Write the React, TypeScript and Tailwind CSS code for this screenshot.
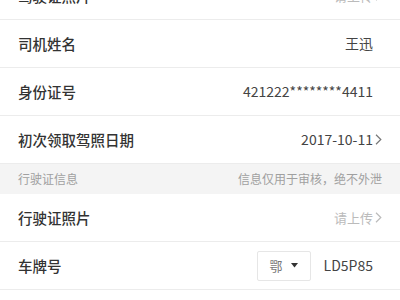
import React from "react";

const Chevron = ({ color = "#888" }: { color?: string }) => (
  <svg width="7" height="11" viewBox="0 0 7 11" className="ml-[2px] shrink-0">
    <path d="M1 0.8 L5.8 5.5 L1 10.2" fill="none" stroke={color} strokeWidth="1.2" />
  </svg>
);

const Row = ({ label, children }: { label: string; children?: React.ReactNode }) => (
  <div className="flex h-[48px] items-center justify-between border-b border-[#ececec] bg-white pl-[18px] pr-[18px]">
    <span className="text-[14.5px] font-medium text-[#333]">{label}</span>
    <div className="flex items-center">{children}</div>
  </div>
);

export default function App() {
  return (
    <div
      className="h-[300px] w-[400px] overflow-hidden bg-white"
      style={{ fontFamily: '"Noto Sans CJK SC", "Noto Sans", sans-serif' }}
    >
      <div className="-mt-[28px]">
        <Row label="驾驶证照片">
          <span className="text-[13px] text-[#bbb]">请上传</span>
          <Chevron color="#bbb" />
        </Row>
        <Row label="司机姓名">
          <span className="mr-[9px] text-[14px] text-[#444]">王迅</span>
        </Row>
        <Row label="身份证号">
          <span className="mr-[9px] text-[14px] text-[#444]">421222********4411</span>
        </Row>
        <Row label="初次领取驾照日期">
          <span className="text-[14px] text-[#444]">2017-10-11</span>
          <Chevron color="#777" />
        </Row>
        <div className="flex h-[30px] items-center justify-between bg-[#f4f4f4] px-[18px] text-[12px] text-[#a0a0a0]">
          <span>行驶证信息</span>
          <span>信息仅用于审核，绝不外泄</span>
        </div>
        <Row label="行驶证照片">
          <span className="text-[13px] text-[#bbb]">请上传</span>
          <Chevron color="#bbb" />
        </Row>
        <Row label="车牌号">
          <div className="mr-[13px] flex h-[30px] w-[54px] items-center justify-center gap-[8px] rounded-[2px] border border-[#e6e6e6]">
            <span className="text-[13px] text-[#777]">鄂</span>
            <svg width="7" height="5" viewBox="0 0 7 5">
              <path d="M0 0 L7 0 L3.5 4.5 Z" fill="#333" />
            </svg>
          </div>
          <span className="mr-[9px] text-[14px] text-[#444]">LD5P85</span>
        </Row>
      </div>
    </div>
  );
}
